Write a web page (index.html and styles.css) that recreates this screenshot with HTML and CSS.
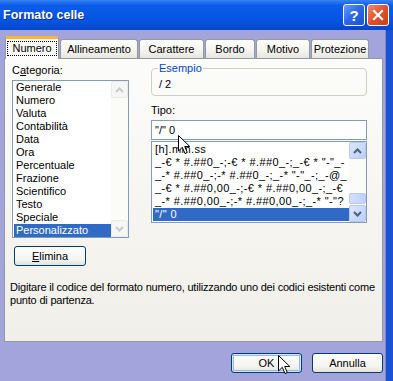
FILE: index.html
```html
<!DOCTYPE html>
<html lang="it">
<head>
    <meta charset="UTF-8">
    <meta name="viewport" content="width=device-width, initial-scale=1.0">
    <title>Formato celle</title>
    <link rel="stylesheet" href="styles.css">
</head>
<body>
    <div class="window">
        <div class="titlebar">
            <span class="title">Formato celle</span>
            <div class="controls">
                <span class="cap help">?</span>
                <span class="cap close">
                    <svg width="12" height="12" viewBox="0 0 12 12"><path d="M2 2 L10 10 M10 2 L2 10" stroke="#fff" stroke-width="2.2" stroke-linecap="square"/></svg>
                </span>
            </div>
        </div>
        <div class="client">
            <div class="tabs">
                <div class="tab active" style="width:54px"><span class="focus">Numero</span></div>
                <div class="tab" style="width:78px">Allineamento</div>
                <div class="tab" style="width:65px">Carattere</div>
                <div class="tab" style="width:50px">Bordo</div>
                <div class="tab" style="width:54px">Motivo</div>
                <div class="tab" style="width:58px">Protezione</div>
            </div>
            <div class="panel">
                <div class="cols">
                    <div class="left">
                        <div class="label">C<u>a</u>tegoria:</div>
                        <div class="listbox cat">
                            <ul class="items">
                                <li>Generale</li>
                                <li>Numero</li>
                                <li>Valuta</li>
                                <li>Contabilità</li>
                                <li>Data</li>
                                <li>Ora</li>
                                <li>Percentuale</li>
                                <li>Frazione</li>
                                <li>Scientifico</li>
                                <li>Testo</li>
                                <li>Speciale</li>
                                <li class="sel">Personalizzato</li>
                            </ul>
                            <div class="vscroll off">
                                <span class="arrow"><svg width="9" height="6" viewBox="0 0 9 6"><path d="M1 5 L4.5 1.5 L8 5" fill="none" stroke="#c8cbd2" stroke-width="2"/></svg></span>
                                <span class="track"></span>
                                <span class="arrow"><svg width="9" height="6" viewBox="0 0 9 6"><path d="M1 1 L4.5 4.5 L8 1" fill="none" stroke="#c8cbd2" stroke-width="2"/></svg></span>
                            </div>
                        </div>
                        <button class="btn elimina"><u>E</u>limina</button>
                    </div>
                    <div class="right">
                        <fieldset class="group">
                            <legend>Esempio</legend>
                            <div class="sample">/ 2</div>
                        </fieldset>
                        <div class="label tipo">Tipo:</div>
                        <div class="textbox">"/" 0</div>
                        <div class="listbox fmt">
                            <ul class="items">
                                <li>[h].mm.ss</li>
                                <li>_-€ * #.##0_-;-€ * #.##0_-;_-€ * "-"_-</li>
                                <li>_-* #.##0_-;-* #.##0_-;_-* "-"_-;_-@_</li>
                                <li>_-€ * #.##0,00_-;-€ * #.##0,00_-;_-€</li>
                                <li>_-* #.##0,00_-;-* #.##0,00_-;_-* "-"?</li>
                                <li class="sel">"/" 0</li>
                            </ul>
                            <div class="vscroll">
                                <span class="arrow"><svg width="9" height="6" viewBox="0 0 9 6"><path d="M1 5 L4.5 1.5 L8 5" fill="none" stroke="#4d6185" stroke-width="2"/></svg></span>
                                <span class="track"><span class="thumb"></span></span>
                                <span class="arrow"><svg width="9" height="6" viewBox="0 0 9 6"><path d="M1 1 L4.5 4.5 L8 1" fill="none" stroke="#4d6185" stroke-width="2"/></svg></span>
                            </div>
                        </div>
                    </div>
                </div>
                <p class="desc">Digitare il codice del formato numero, utilizzando uno dei codici esistenti come<br>punto di partenza.</p>
            </div>
            <div class="buttons">
                <button class="btn default">OK</button>
                <button class="btn">Annulla</button>
            </div>
        </div>
        <!-- puntatori del mouse -->
        <svg class="cursor c1" width="13" height="20" viewBox="0 0 13 20"><path d="M0.5 0.5 L0.5 16 L4.3 12.3 L7 18.5 L9.3 17.5 L6.7 11.5 L11.8 11.5 Z" fill="#fff" stroke="#000" stroke-width="1"/></svg>
        <svg class="cursor c2" width="13" height="20" viewBox="0 0 13 20"><path d="M0.5 0.5 L0.5 16 L4.3 12.3 L7 18.5 L9.3 17.5 L6.7 11.5 L11.8 11.5 Z" fill="#fff" stroke="#000" stroke-width="1"/></svg>
    </div>
</body>
</html>
```

FILE: styles.css
```css
body {
    margin: 0;
    width: 393px;
    height: 381px;
    overflow: hidden;
    background: #a4a4dd;
    font-family: "Liberation Sans", Arial, sans-serif;
    font-size: 11px;
    color: #000;
}
.window {
    position: relative;
    height: 381px;
    display: flex;
    flex-direction: column;
}

/* barra del titolo */
.titlebar {
    height: 30px;
    flex: none;
    display: flex;
    align-items: center;
    justify-content: space-between;
    padding: 0 4px 0 3px;
    background: linear-gradient(#3a82f4, #0b5ce8 18%, #0454e2 70%, #0846c6);
}
.title {
    color: #fff;
    font-weight: bold;
    font-size: 12.5px;
    text-shadow: 1px 1px #0c2f9a;
}
.controls {
    display: flex;
    gap: 2px;
}
.cap {
    width: 20px;
    height: 20px;
    border: 1px solid #fff;
    border-radius: 3px;
    display: flex;
    align-items: center;
    justify-content: center;
}
.help {
    background: linear-gradient(135deg, #6b9cf8, #2b66e6 50%, #1c52d4);
    color: #fff;
    font-weight: bold;
    font-size: 15px;
}
.close {
    background: linear-gradient(135deg, #f08b6c, #e0522e 50%, #c93d1b);
}

/* area client */
.client {
    flex: 1;
    display: flex;
    flex-direction: column;
    padding: 6px 3px 0 4px;
    border-right: 7px solid #1a52d6;
    box-shadow: inset -1px 0 #7f86cf;
}
.tabs {
    display: flex;
    align-items: flex-end;
    gap: 1px;
    padding-left: 1px;
}
.tab {
    height: 19px;
    box-sizing: border-box;
    border: 1px solid #919b9c;
    border-bottom: none;
    border-radius: 3px 3px 0 0;
    background: linear-gradient(#fefefe, #f4f3ef 60%, #e6e5df);
    display: flex;
    align-items: center;
    justify-content: center;
    white-space: nowrap;
}
.tab.active {
    position: relative;
    z-index: 1;
    height: 23px;
    margin-bottom: -1px;
    background: #fcfcfb;
    border-top: 3px solid #f9b43a;
    padding-bottom: 1px;
}
.focus {
    outline: 1px dotted #000;
    outline-offset: 0;
    padding: 0 4px;
    line-height: 13px;
}

.panel {
    height: 284px;
    box-sizing: border-box;
    border: 1px solid #919b9c;
    background: linear-gradient(#fcfcfb, #f5f4f0 60%, #f0efe9);
    padding: 5px 15px 0 5px;
}
.cols {
    display: flex;
    gap: 22px;
    padding-left: 2px;
}
.left {
    width: 117px;
    flex: none;
    display: flex;
    flex-direction: column;
}
.right {
    flex: 1;
    min-width: 0;
    display: flex;
    flex-direction: column;
}
.label {
    line-height: 13px;
}
u {
    text-decoration: underline;
}

/* caselle di riepilogo */
.listbox {
    display: flex;
    border: 1px solid #7f9db9;
    background: #fff;
    overflow: hidden;
}
.cat {
    margin-top: 3px;
    height: 158px;
    box-sizing: border-box;
}
.fmt {
    margin-top: 1px;
    height: 82px;
    box-sizing: border-box;
}
.items {
    flex: 1;
    margin: 0;
    padding: 0 0 0 1px;
    list-style: none;
    min-width: 0;
}
.fmt .items {
    padding-top: 1px;
}
.items li {
    height: 13px;
    line-height: 13px;
    padding-left: 2px;
    white-space: nowrap;
    overflow: hidden;
}
.fmt .items li {
    letter-spacing: 0.4px;
}
.items li.sel {
    background: #316ac5;
    color: #fff;
}

.vscroll {
    width: 17px;
    flex: none;
    display: flex;
    flex-direction: column;
    background: #fbfbf8;
}
.vscroll .arrow {
    height: 17px;
    box-sizing: border-box;
    border: 1px solid #b7c9f1;
    border-radius: 2px;
    background: linear-gradient(135deg, #dde7fe, #bccffa);
    display: flex;
    align-items: center;
    justify-content: center;
}
.vscroll.off .arrow {
    border-color: #e8eaee;
    background: #f6f6f3;
}
.vscroll .track {
    flex: 1;
    display: flex;
    flex-direction: column;
    justify-content: flex-end;
}
.thumb {
    height: 9px;
    margin-bottom: 1px;
    border: 1px solid #b7c9f1;
    border-radius: 2px;
    background: linear-gradient(to right, #d3e0fd, #c0d2fa);
}

/* gruppo Esempio */
.group {
    margin: -2px 0 0;
    padding: 3px 5px 4px;
    border: 1px solid #d0d0bf;
    border-radius: 4px;
}
.group legend {
    color: #0046d5;
    line-height: 13px;
    padding: 0 1px;
    margin-left: 1px;
}
.sample {
    line-height: 13px;
    padding-left: 2px;
}
.tipo {
    margin-top: 8px;
}
.textbox {
    margin-top: 3px;
    height: 20px;
    box-sizing: border-box;
    border: 1px solid #7f9db9;
    background: #fff;
    line-height: 18px;
    padding-left: 3px;
}

.desc {
    margin: 15px 0 0;
    line-height: 13px;
    white-space: nowrap;
    letter-spacing: -0.2px;
}

/* pulsanti */
.btn {
    font: inherit;
    color: #000;
    height: 20px;
    width: 71px;
    border: 1px solid #003c74;
    border-radius: 3px;
    background: linear-gradient(#fefefe, #f4f4f0 70%, #e3e2da);
    padding: 0;
}
.elimina {
    margin-top: 8px;
    margin-left: 2px;
    width: 72px;
}
.btn.default {
    box-shadow: inset 0 0 0 1px #cee7ff, inset 0 0 0 2px #98b8ea;
}
.buttons {
    display: flex;
    justify-content: flex-end;
    gap: 10px;
    margin-top: 11px;
}

.cursor {
    position: absolute;
    z-index: 5;
}
.c1 {
    left: 178px;
    top: 135px;
}
.c2 {
    left: 278px;
    top: 355px;
}
```
